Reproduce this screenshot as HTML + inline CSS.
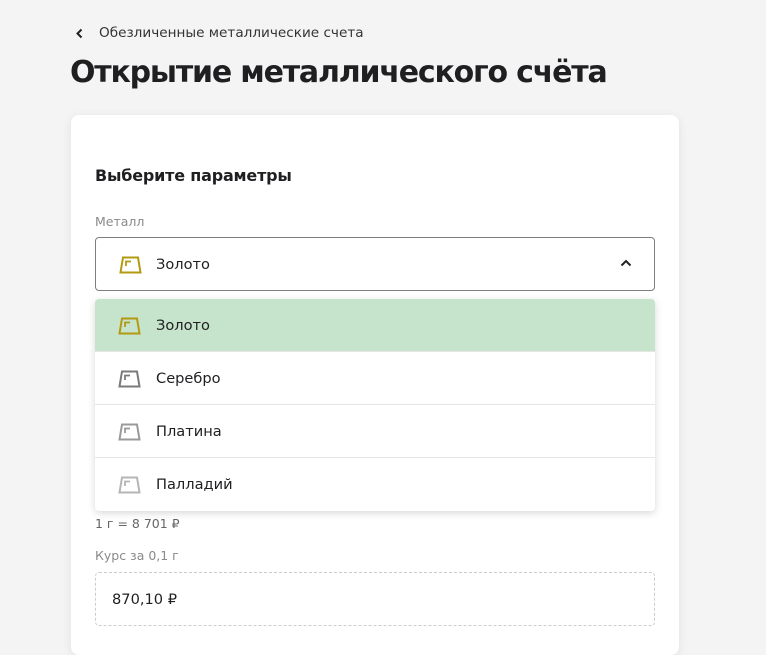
<!DOCTYPE html><html><head><meta charset="utf-8"><style>
*{box-sizing:border-box;margin:0;padding:0}
body{width:766px;height:640px;overflow:hidden;background:#f4f4f4;font-family:"DejaVu Sans","Liberation Sans",sans-serif;color:#1f1f22;position:relative}
.a{position:absolute}
.crumb{left:99px;top:25px;font-size:13.6px;color:#333}
.title{left:70px;top:55px;font-size:30px;font-weight:bold;letter-spacing:-1.2px;font-family:"DejaVu Sans",sans-serif}
.card{left:71px;top:115px;width:608px;height:540px;background:#fff;border-radius:8px;box-shadow:0 2px 10px rgba(0,0,0,.08)}
.h{left:95px;top:166px;font-size:16px;font-weight:bold;letter-spacing:-0.2px}
.lbl{font-size:12.5px;color:#8a8a8a}
.field{left:95px;top:237px;width:560px;height:54px;border:1px solid #7d7d7d;border-radius:4px;background:#fff}
.txt{font-size:14.6px;color:#1f1f22}
.list{left:95px;top:299px;width:560px;height:212px;background:#fff;border-radius:4px;box-shadow:0 2px 8px rgba(0,0,0,.16);overflow:hidden}
.it{height:53px;position:relative;border-bottom:1px solid #e6e6e6}
.it:last-child{border-bottom:none}
.it svg{position:absolute;left:23px;top:18px}
.it span{position:absolute;left:61px;top:18px}
.box2{left:95px;top:572px;width:560px;height:54px;border:1px dashed #ccc;border-radius:4px}
</style></head><body>
<svg class="a" style="left:75px;top:28px" width="9" height="11" viewBox="0 0 9 11"><path d="M6.5 1.5L2.5 5.5L6.5 9.5" fill="none" stroke="#222" stroke-width="2"/></svg>
<div class="a crumb">Обезличенные металлические счета</div>
<div class="a title">Открытие металлического счёта</div>
<div class="a card"></div>
<div class="a h">Выберите параметры</div>
<div class="a lbl" style="left:95px;top:214px">Металл</div>
<div class="a field">
<svg class="a" style="left:23px;top:18px" width="23" height="18" viewBox="0 0 23 18"><path d="M4 1.5H19L21.5 16.5H1.5Z" fill="none" stroke="#b39a13" stroke-width="2"/><path d="M7 10V5.5H12" fill="none" stroke="#b39a13" stroke-width="1.8"/></svg>
<span class="a txt" style="left:60px;top:18px">Золото</span>
<svg class="a" style="left:523px;top:20px" width="14" height="10" viewBox="0 0 14 10"><path d="M2.5 7.5L7 3L11.5 7.5" fill="none" stroke="#222" stroke-width="2"/></svg>
</div>
<div class="a lbl" style="left:95px;top:516px;color:#666">1 г = 8 701 ₽</div>
<div class="a lbl" style="left:95px;top:548px">Курс за 0,1 г</div>
<div class="a box2"><span class="a txt" style="left:16px;top:18px">870,10 ₽</span></div>
<div class="a list">
<div class="it" style="background:#c6e3cb"><svg width="23" height="18" viewBox="0 0 23 18"><path d="M4 1.5H19L21.5 16.5H1.5Z" fill="none" stroke="#b39a13" stroke-width="2"/><path d="M7 10V5.5H12" fill="none" stroke="#b39a13" stroke-width="1.8"/></svg><span class="txt">Золото</span></div>
<div class="it"><svg width="23" height="18" viewBox="0 0 23 18"><path d="M4 1.5H19L21.5 16.5H1.5Z" fill="none" stroke="#7a7a7a" stroke-width="2"/><path d="M7 10V5.5H12" fill="none" stroke="#7a7a7a" stroke-width="1.8"/></svg><span class="txt">Серебро</span></div>
<div class="it"><svg width="23" height="18" viewBox="0 0 23 18"><path d="M4 1.5H19L21.5 16.5H1.5Z" fill="none" stroke="#999" stroke-width="2"/><path d="M7 10V5.5H12" fill="none" stroke="#999" stroke-width="1.8"/></svg><span class="txt">Платина</span></div>
<div class="it"><svg width="23" height="18" viewBox="0 0 23 18"><path d="M4 1.5H19L21.5 16.5H1.5Z" fill="none" stroke="#b5b5b5" stroke-width="2"/><path d="M7 10V5.5H12" fill="none" stroke="#b5b5b5" stroke-width="1.8"/></svg><span class="txt">Палладий</span></div>
</div>
</body></html>
